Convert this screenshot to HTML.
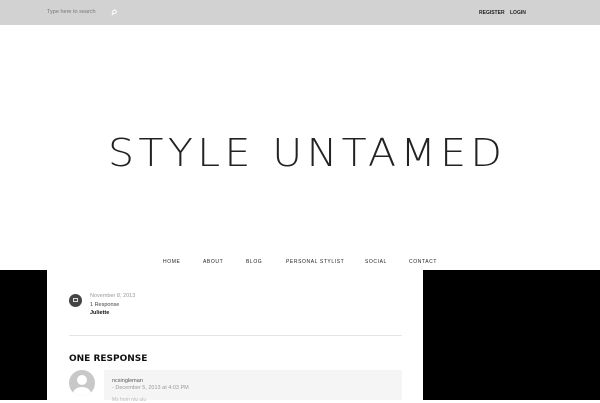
<!DOCTYPE html>
<html><head><meta charset="utf-8"><style>
*{margin:0;padding:0;box-sizing:border-box}
body{width:600px;height:400px;overflow:hidden;background:#fff;font-family:"Liberation Sans",sans-serif;position:relative}
.top{position:absolute;left:0;top:0;width:600px;height:25px;background:#d2d2d2}
.abs{position:absolute;white-space:nowrap}
.blk{position:absolute;background:#000;top:270px;height:130px}
.nav{font-size:5px;letter-spacing:0.6px;color:#222;top:259px}
</style></head><body>
<div class="top"></div>
<div class="abs" style="left:47px;top:9px;font-size:5.5px;color:#777">Type here to search</div>
<svg class="abs" style="left:111px;top:9px" width="6" height="7"><circle cx="3.5" cy="2.8" r="1.8" fill="none" stroke="#fff" stroke-width="1"/><line x1="2.2" y1="4.2" x2="0.8" y2="6.2" stroke="#fff" stroke-width="1"/></svg>
<div class="abs" style="left:479px;top:10px;font-size:5px;font-weight:bold;color:#222">REGISTER</div>
<div class="abs" style="left:510px;top:10px;font-size:5px;font-weight:bold;color:#222">LOGIN</div>
<svg class="abs" style="left:0;top:120px" width="600" height="60"><text x="108" y="46" textLength="394" lengthAdjust="spacing" font-family="DejaVu Sans" font-weight="200" font-size="41" fill="#222" transform="translate(0,46) scale(1,0.93) translate(0,-46)">STYLE UNTAMED</text></svg>
<div class="abs nav" style="left:163px">HOME</div>
<div class="abs nav" style="left:203px">ABOUT</div>
<div class="abs nav" style="left:246px">BLOG</div>
<div class="abs nav" style="left:286px">PERSONAL STYLIST</div>
<div class="abs nav" style="left:365px">SOCIAL</div>
<div class="abs nav" style="left:409px">CONTACT</div>
<div class="blk" style="left:0;width:47px"></div>
<div class="blk" style="left:423px;width:177px"></div>
<div class="abs" style="left:69px;top:294px;width:13px;height:13px;border-radius:50%;background:#444"></div>
<div class="abs" style="left:73px;top:298px;width:5px;height:4px;border:1px solid #ddd"></div>
<div class="abs" style="left:90px;top:293px;font-size:5.5px;color:#999">November 8, 2013</div>
<div class="abs" style="left:90px;top:302px;font-size:5.5px;color:#444">1 Response</div>
<div class="abs" style="left:90px;top:310px;font-size:5.5px;font-weight:bold;color:#111">Juliette</div>
<div class="abs" style="left:69px;top:335px;width:333px;height:1px;background:#e4e4e4"></div>
<div class="abs" style="left:69px;top:354px;font-size:9px;font-weight:bold;color:#111;font-family:'DejaVu Sans',sans-serif">ONE RESPONSE</div>
<div class="abs" style="left:69px;top:370px;width:26px;height:26px;border-radius:50%;background:#c8c8c8;overflow:hidden">
<div style="position:absolute;left:8px;top:5px;width:10px;height:10px;border-radius:50%;background:#fff"></div>
<div style="position:absolute;left:4px;top:17px;width:18px;height:14px;border-radius:50%;background:#fff"></div></div>
<div class="abs" style="left:104px;top:370px;width:298px;height:30px;background:#f5f5f5"></div>
<div class="abs" style="left:112px;top:378px;font-size:5.5px;color:#555">ncsingleman</div>
<div class="abs" style="left:112px;top:385px;font-size:5.5px;color:#999">- December 5, 2013 at 4:03 PM</div>
<div class="abs" style="left:112px;top:397px;font-size:5px;color:#bbb">Ms hom ntu ulu</div>
</body></html>
